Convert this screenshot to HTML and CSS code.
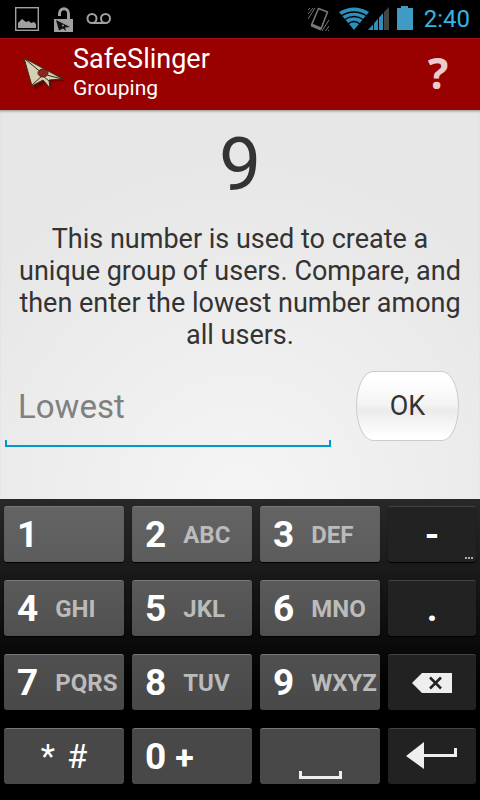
FILE: index.html
```html
<!DOCTYPE html>
<html lang="en">
<head>
<meta charset="utf-8">
<meta name="viewport" content="width=device-width, initial-scale=1">
<title>SafeSlinger</title>
<link rel="stylesheet" href="styles.css">
</head>
<body>
<div class="status">
  <svg class="status-left" width="104" height="38" viewBox="0 0 104 38" aria-hidden="true">
    <g fill="none" stroke="#a0a0a0">
      <rect x="4.700" y="7.700" width="22.600" height="22.600" stroke-width="1.400"/>
      <path d="M48.500 16v-2c0-7 9-7 9 0v6" stroke-width="3"/>
      <circle cx="81" cy="18.500" r="4.500" stroke-width="2"/><circle cx="94.500" cy="18.500" r="4.500" stroke-width="2"/>
      <path d="M81 23h13.500" stroke-width="2"/>
    </g>
    <path fill="#a0a0a0" d="M7 28v-5l4-4 4 3 3-1 2 2 3-1 2 2v4zM43 19h19v13H43z"/>
    <path fill="#111" d="M45 20l14 7-5 .5 1 3.500-3-2.500-4 2z"/>
    <circle cx="52" cy="25.500" r="1" fill="#a0a0a0"/>
  </svg>
  <svg class="status-right" width="108" height="38" viewBox="0 0 108 38" aria-hidden="true">
    <g fill="none" stroke="#777">
      <path d="M10.500 8.500L19.500 12 13 29 3.500 25z" stroke-width="1.600" stroke-linejoin="round"/>
      <path d="M3.500 25l9.500 4" stroke-width="3"/>
      <path d="M0 10l2-2M0 14l5-6M0 19L7 8M14 31l7-11M17.500 31l3.500-5M20 31l1-1"/>
    </g>
    <path fill="#2d8fba" d="M31 12q15-9 30 0L46 30z"/>
    <path fill="none" stroke="#000" stroke-width="1.300" d="M33 16q13-8 26 0M36 20q10-7 20 0M40 24q6-5 12 0"/>
    <path fill="#2d8fba" d="M60 30L76 12v18z"/><path fill="#444" d="M76 12l5-5v23h-5z"/>
    <path stroke="#000" d="M65.500 20v10M70.500 16v14M75.500 10v20"/>
    <path fill="#409bc4" d="M89 8h4V6h7v2h5v22H89z"/>
  </svg>
  <time class="clock">2:40</time>
</div>
<header class="bar">
  <svg class="logo" width="48" height="48" viewBox="0 0 48 48" aria-hidden="true">
    <path fill="#400" opacity=".5" d="M8 10l9 29 10-6 7 6-1-8 14-1z"/>
    <path fill="#d5cfb4" stroke="#3a2a18" stroke-linejoin="round" d="M6 7l8 28 11-6 7 8-1-8 14-1z"/>
    <path fill="none" stroke="#3a2a18" d="M7 8l18 15 19 5M25 24L14 34M25 25l6 5"/>
    <ellipse cx="25" cy="22" rx="5" ry="4" fill="#8c2420" stroke="#5a2018"/>
  </svg>
  <div class="titles">
    <h1 class="title">SafeSlinger</h1>
    <p class="subtitle">Grouping</p>
  </div>
  <button class="help" type="button" aria-label="Help">?</button>
</header>
<main class="content">
  <p class="number">9</p>
  <p class="message">This number is used to create a unique group of users. Compare, and then enter the lowest number among all users.</p>
  <form class="entry">
    <div class="field"><input class="input" type="text" inputmode="numeric" placeholder="Lowest" aria-label="Lowest"></div>
    <button class="ok" type="button">OK</button>
  </form>
</main>
<section class="keyboard" aria-label="Keyboard">
  <button class="key" type="button"><b class="digit">1</b></button>
  <button class="key" type="button"><b class="digit">2</b><span class="letters">ABC</span></button>
  <button class="key" type="button"><b class="digit">3</b><span class="letters">DEF</span></button>
  <button class="key dark" type="button"><b class="digit">-</b><span class="more">
    <svg width="8" height="2" viewBox="0 0 8 2" aria-hidden="true"><path fill="#aaa" d="M0 0h2v2H0zM3 0h2v2H3zM6 0h2v2H6z"/></svg></span></button>
  <button class="key" type="button"><b class="digit">4</b><span class="letters">GHI</span></button>
  <button class="key" type="button"><b class="digit">5</b><span class="letters">JKL</span></button>
  <button class="key" type="button"><b class="digit">6</b><span class="letters">MNO</span></button>
  <button class="key dark" type="button"><b class="digit">.</b></button>
  <button class="key" type="button"><b class="digit">7</b><span class="letters">PQRS</span></button>
  <button class="key" type="button"><b class="digit">8</b><span class="letters">TUV</span></button>
  <button class="key" type="button"><b class="digit">9</b><span class="letters">WXYZ</span></button>
  <button class="key dark" type="button" aria-label="Delete">
    <svg width="40" height="20" viewBox="0 0 40 20" aria-hidden="true"><path fill="#eee" d="M0 10L10 0h30v20H10z"/><path stroke="#222" stroke-width="2.500" d="M18 4.500l11 11M29 4.500l-11 11"/></svg></button>
  <button class="key symbols" type="button"><span>*</span><span>#</span></button>
  <button class="key zero" type="button"><b class="digit">0</b><b class="plus">+</b></button>
  <button class="key space" type="button" aria-label="Space">
    <svg width="43" height="8" viewBox="0 0 43 8" aria-hidden="true"><path fill="#eee" d="M0 0h3v5h37V0h3v8H0z"/></svg></button>
  <button class="key dark" type="button" aria-label="Enter">
    <svg width="52" height="30" viewBox="0 0 52 30" aria-hidden="true"><path fill="#eee" d="M0 14L18 0v12h30V6h3v9H18v12z"/></svg></button>
</section>
</body>
</html>
```

FILE: styles.css
```css
* { box-sizing: border-box; }

body {
  margin: 0;
  min-height: 100vh;
  display: flex;
  flex-direction: column;
  background: #000;
  color: #333;
  font-family: Roboto, "Liberation Sans", sans-serif;
}

h1, p { margin: 0; font-weight: 400; }

button, input { font: inherit; border: 0; padding: 0; margin: 0; }

svg { display: block; flex: none; }

.status {
  display: flex;
  align-items: center;
  height: 38px;
  padding: 0 10px 0 11px;
}

.status-right { margin-left: auto; }

.clock {
  margin-left: 8px;
  color: #33b5e5;
  font-size: 24px;
  line-height: 40px;
}

.bar {
  display: flex;
  align-items: center;
  height: 72px;
  padding: 0 18px;
  background: #900;
  border-top: 1px solid #a31010;
  color: #fff;
}

.titles { margin-left: 7px; padding-bottom: 6px; }

.title { font-size: 27px; line-height: 32px; }

.subtitle { font-size: 21px; line-height: 26px; }

.help {
  width: 48px;
  margin-left: auto;
  padding-bottom: 4px;
  background: none;
  color: #ebcccc;
  font-family: "Noto Sans", sans-serif;
  font-size: 43px;
  font-weight: 700;
  line-height: 60px;
}

.content {
  flex: 1;
  padding: 10px 5px 0;
  background: radial-gradient(circle 330px at 50% 100%, #f5f5f5, #e7e7e7);
  box-shadow: inset 0 3px 3px -2px #888;
  text-align: center;
}

.number { font-size: 75px; line-height: 88px; }

.message {
  padding: 15px 12px 0;
  font-size: 27px;
  line-height: 32px;
}

.entry {
  display: flex;
  align-items: flex-start;
  padding: 20px 16px 0 0;
}

.field {
  flex: 1;
  padding-bottom: 6px;
  background:
    linear-gradient(#0099cc, #0099cc) left bottom / 2px 7px no-repeat,
    linear-gradient(#0099cc, #0099cc) right bottom / 2px 7px no-repeat,
    linear-gradient(#0099cc, #0099cc) left bottom / 100% 2px no-repeat;
}

.input {
  display: block;
  width: 100%;
  height: 70px;
  padding: 0 13px;
  background: none;
  color: #333;
  font-size: 33px;
  outline: 0;
}

.input::placeholder { color: #808080; opacity: 1; }

.ok {
  width: 103px;
  height: 70px;
  margin-left: 25px;
  border: 1px solid #ccc;
  border-radius: 17px / 35px;
  background: linear-gradient(#fff 10%, #f4f4f4 48%, #ebebeb 56%, #fff 96%);
  color: #333;
  font-size: 27px;
}

.keyboard {
  display: grid;
  grid-template-columns: 120fr 120fr 120fr 88fr;
  gap: 18px 8px;
  padding: 7px 4px 16px;
  background: linear-gradient(#282828, #000 65%);
}

.key {
  position: relative;
  display: flex;
  align-items: center;
  height: 56px;
  padding-left: 13px;
  border-top: 1px solid #777;
  border-radius: 3px;
  background: linear-gradient(#646464, #5c5c5c);
  box-shadow: 0 1px 1px #000;
  color: #fff;
  text-align: left;
}

.key:nth-child(n + 5) { background: linear-gradient(#5a5a5a, #505050); }
.key:nth-child(n + 9) { background: linear-gradient(#505050, #484848); }
.key:nth-child(n + 13) { background: #484848; }

.keyboard .key.dark {
  justify-content: center;
  padding: 0;
  border-color: #444;
  background: #222;
}

.digit { font-size: 37px; line-height: 56px; }

.letters {
  margin-left: 17px;
  color: #bbb;
  font-size: 24px;
  font-weight: 700;
}

.more {
  position: absolute;
  right: 3px;
  bottom: 3px;
}

.symbols {
  justify-content: center;
  gap: 12px;
  padding: 0;
  font-size: 33px;
}

.plus { margin-left: 9px; font-size: 34px; }

.space {
  align-items: flex-end;
  justify-content: center;
  padding: 0 0 5px;
}
```
